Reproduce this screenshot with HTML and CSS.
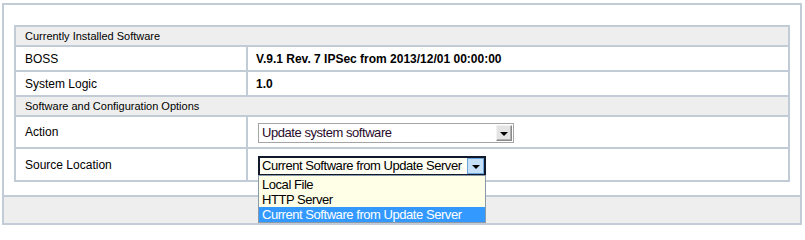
FILE: index.html
```html
<!DOCTYPE html>
<html>
<head>
<meta charset="utf-8">
<link rel="stylesheet" href="styles.css">
</head>
<body>
<div class="panel">
  <div class="content">
    <div class="tbl">
      <div class="row head"><div class="hcell">Currently Installed Software</div></div>
      <div class="row data">
        <div class="label">BOSS</div>
        <div class="value bold">V.9.1 Rev. 7 IPSec from 2013/12/01 00:00:00</div>
      </div>
      <div class="row data">
        <div class="label">System Logic</div>
        <div class="value bold">1.0</div>
      </div>
      <div class="row head"><div class="hcell">Software and Configuration Options</div></div>
      <div class="row action">
        <div class="label">Action</div>
        <div class="value">
          <div class="select sel1">
            <span class="seltext">Update system software</span>
            <span class="arrow grey"><span class="tri"></span></span>
          </div>
        </div>
      </div>
      <div class="row source">
        <div class="label">Source Location</div>
        <div class="value">
          <div class="selwrap">
            <div class="select sel2">
              <span class="seltext">Current Software from Update Server</span>
              <span class="arrow blue"><span class="tri"></span></span>
            </div>
            <ul class="list">
              <li>Local File</li>
              <li>HTTP Server</li>
              <li class="on">Current Software from Update Server</li>
            </ul>
          </div>
        </div>
      </div>
    </div>
  </div>
  <div class="footer"></div>
</div>
</body>
</html>
```
FILE: styles.css
```css
html, body {
  margin: 0;
  padding: 0;
  background: #fff;
}
body {
  font-family: "Liberation Sans", Arial, sans-serif;
  color: #000;
}
.panel {
  margin: 3px 0 0 2px;
  width: 796px;
  border: 2px solid #c2ccd6;
}
.content {
  padding: 20px 10px 13px 10px;
}
.tbl {
  border: 2px solid #c2ccd6;
  border-bottom: none;
}
.row {
  display: flex;
  border-bottom: 2px solid #c2ccd6;
}
.row.head {
  height: 18px;
  background: #eeeeee;
}
.hcell {
  font-size: 11px;
  line-height: 18px;
  padding-left: 9px;
}
.row.data { height: 23px; }
.row.action { height: 30px; }
.row.source { height: 31px; }
.label {
  width: 232px;
  flex-shrink: 0;
  border-right: 2px solid #c2ccd6;
  font-size: 12px;
  padding-left: 9px;
  box-sizing: border-box;
  display: flex;
  align-items: center;
}
.value {
  flex: 1;
  font-size: 12px;
  padding-left: 8px;
  display: flex;
  align-items: center;
}
.bold { font-weight: bold; }
.row.action .value { padding-left: 10px; align-items: flex-start; padding-top: 6px; }
.row.source .value { padding-left: 10px; align-items: flex-start; padding-top: 7px; }
.select {
  height: 20px;
  box-sizing: border-box;
  display: flex;
  align-items: center;
  font-size: 13px;
  letter-spacing: -0.45px;
  position: relative;
}
.sel1 {
  width: 256px;
  border: 1px solid #a5a5a5;
  background: #fff;
  color: #2a0a2a;
}
.sel2 {
  width: 228px;
  border: 2px solid #10182a;
  background: #fffff4;
  color: #000;
}
.seltext {
  flex: 1;
  min-width: 0;
  overflow: hidden;
  padding-left: 3px;
  white-space: nowrap;
  line-height: 16px;
}
.sel2 .seltext { padding-left: 2px; }
.arrow {
  flex-shrink: 0;
  width: 16px;
  height: 16px;
  box-sizing: border-box;
  display: flex;
  align-items: center;
  justify-content: center;
  margin-right: 1px;
}
.arrow.grey {
  background: #e4e4e4;
  border: 1px solid #8a8a8a;
  border-top-color: #f2f2f2;
  border-left-color: #f2f2f2;
  box-shadow: inset -1px -1px 0 #b0b0b0;
}
.arrow.blue {
  background: #c6e0f8;
  border: 1px solid #6aa5dc;
  width: 17px;
  height: 16px;
  margin-right: 0;
}
.tri {
  width: 0;
  height: 0;
  border-left: 4px solid transparent;
  border-right: 4px solid transparent;
  border-top: 4px solid #000;
  margin-top: 2px;
}
.selwrap {
  position: relative;
}
.list {
  position: absolute;
  left: 0;
  top: 19px;
  width: 228px;
  box-sizing: border-box;
  margin: 0;
  padding: 1px 0 0 0;
  list-style: none;
  background: #ffffe8;
  border: 1px solid #8a9aaa;
  font-size: 13px;
  letter-spacing: -0.45px;
  z-index: 5;
}
.list li {
  height: 15px;
  line-height: 15px;
  padding-left: 3px;
  white-space: nowrap;
  color: #000;
}
.list li.on {
  background: #3399ff;
  color: #fff;
}
.footer {
  height: 26px;
  background: #eeeeee;
  border-top: 2px solid #c2ccd6;
}
```
